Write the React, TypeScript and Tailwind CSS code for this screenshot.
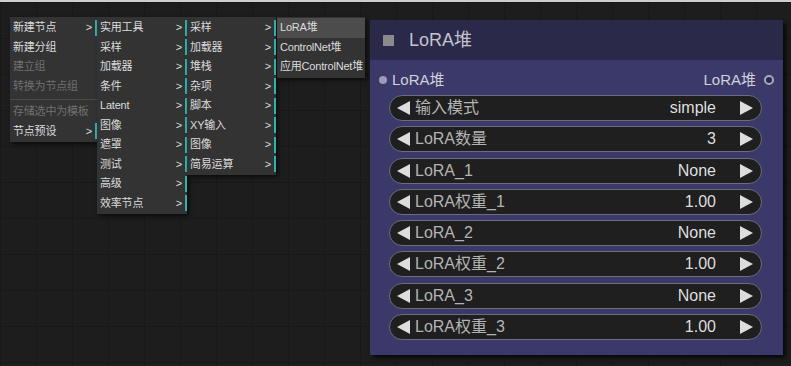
import React from 'react';

type Item = { label: string; sub?: boolean; disabled?: boolean; active?: boolean; sep?: boolean };

const menu1: Item[] = [
  { label: '新建节点', sub: true },
  { label: '新建分组' },
  { label: '建立组', disabled: true },
  { label: '转换为节点组', disabled: true },
  { label: '', sep: true },
  { label: '存储选中为模板', disabled: true },
  { label: '节点预设', sub: true },
];

const menu2: Item[] = ['实用工具', '采样', '加载器', '条件', 'Latent', '图像', '遮罩', '测试', '高级', '效率节点'].map(
  (label) => ({ label, sub: true })
);

const menu3: Item[] = ['采样', '加载器', '堆栈', '杂项', '脚本', 'XY输入', '图像', '简易运算'].map((label) => ({
  label,
  sub: true,
}));

const menu4: Item[] = [{ label: 'LoRA堆', active: true }, { label: 'ControlNet堆' }, { label: '应用ControlNet堆' }];

const widgets = [
  ['输入模式', 'simple'],
  ['LoRA数量', '3'],
  ['LoRA_1', 'None'],
  ['LoRA权重_1', '1.00'],
  ['LoRA_2', 'None'],
  ['LoRA权重_2', '1.00'],
  ['LoRA_3', 'None'],
  ['LoRA权重_3', '1.00'],
];

function Menu({ items, className }: { items: Item[]; className: string }) {
  return (
    <div className={`absolute flex flex-col py-[1px] bg-[#333333] shadow-[2px_2px_4px_rgba(0,0,0,0.6)] ${className}`}>
      {items.map((it, i) =>
        it.sep ? (
          <div key={i} className="h-[6px] flex items-center">
            <div className="h-px w-full bg-[#4a4a4a]" />
          </div>
        ) : (
          <div
            key={i}
            className={`h-[19.5px] flex items-center pl-[3px] text-[11px] leading-none tracking-[-0.2px] ${
              it.active ? 'bg-[#4c4c4c]' : ''
            } ${it.disabled ? 'text-[#707070]' : 'text-[#dcdcdc]'}`}
          >
            <span className="flex-1 whitespace-nowrap">{it.label}</span>
            {it.sub && (
              <>
                <span className="text-[11px] mr-[3px]">&gt;</span>
                <span className="w-[2px] h-[16px] bg-[#2fb3ad]" />
              </>
            )}
          </div>
        )
      )}
    </div>
  );
}

function Tri({ dir }: { dir: 'l' | 'r' }) {
  return (
    <svg width="13" height="14" viewBox="0 0 13 14">
      <polygon points={dir === 'l' ? '13,0 13,14 0,7' : '0,0 0,14 13,7'} fill="#dddddd" />
    </svg>
  );
}

export default function App() {
  return (
    <div
      className="relative w-[791px] h-[366px] overflow-hidden bg-[#1d1d1d] border-t-2 border-[#cfcfcf] bg-[linear-gradient(#181818_1px,transparent_1px),linear-gradient(90deg,#181818_1px,transparent_1px)] bg-[size:36px_36px]"
      style={{ fontFamily: '"Liberation Sans", "Noto Sans CJK SC", sans-serif' }}
    >
      <Menu items={menu1} className="left-[10px] top-[15px] w-[87px]" />
      <Menu items={menu2} className="left-[97px] top-[15px] w-[90px]" />
      <Menu items={menu3} className="left-[187px] top-[15px] w-[89px]" />
      <Menu items={menu4} className="left-[277px] top-[15px] w-[88px]" />

      {/* Node */}
      <div className="absolute left-[370px] top-[18px] w-[413px] h-[335px] flex flex-col bg-[#3a396a] shadow-[3px_3px_4px_rgba(0,0,0,0.7)]">
        <div className="h-[40px] flex items-center bg-[#2a294a] pl-[13px] gap-[15px]">
          <div className="w-[11px] h-[11px] bg-[#8a8a8a]" />
          <span className="text-[18px] text-[#c4c4cc]">LoRA堆</span>
        </div>
        <div className="h-[35px] pt-[5px] flex items-center pl-[9px] pr-[9px] text-[15px] text-[#d0d0d8]">
          <div className="w-[8px] h-[8px] rounded-full bg-[#9c9cb4]" />
          <span className="ml-[5px] flex-1">LoRA堆</span>
          <span>LoRA堆</span>
          <div className="ml-[8px] w-[10px] h-[10px] rounded-full border-2 border-[#a8a8bc] bg-[#2a294a]" />
        </div>
        <div className="flex flex-col gap-[5.3px] pl-[19px] pr-[21px]">
          {widgets.map(([label, value]) => (
            <div
              key={label}
              className="h-[26px] flex items-center rounded-full border-[1.5px] border-[#6c6c7c] bg-[#1f1f1f] pl-[7px] pr-[8px] text-[16px]"
            >
              <Tri dir="l" />
              <span className="ml-[5px] flex-1 text-[#b4b4b4]">{label}</span>
              <span className="text-[#dedede]">{value}</span>
              <span className="ml-[24px]">
                <Tri dir="r" />
              </span>
            </div>
          ))}
        </div>
      </div>
    </div>
  );
}
